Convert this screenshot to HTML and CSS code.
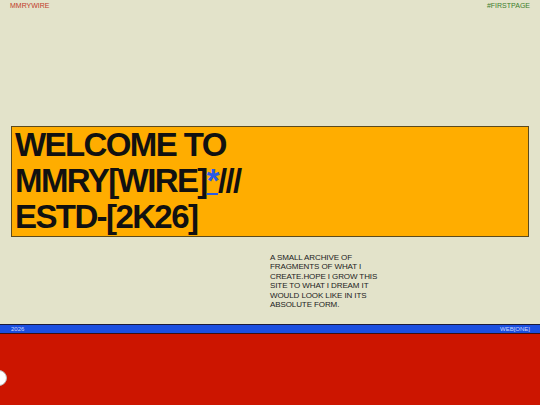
FILE: index.html
```html
<!DOCTYPE html>
<html>
<head>
<meta charset="utf-8">
<link rel="stylesheet" href="styles.css">
</head>
<body>
<div class="page">
  <header class="top">
    <span class="brand">MMRYWIRE</span>
    <span class="tag">#FIRSTPAGE</span>
  </header>
  <section class="hero">
    <h1 class="title">WELCOME TO<br>MMRY[WIRE]<a class="star" href="#">*</a>///<br>ESTD-[2K26]</h1>
  </section>
  <p class="about">A SMALL ARCHIVE OF FRAGMENTS OF WHAT I CREATE.HOPE I GROW THIS SITE TO WHAT I DREAM IT WOULD LOOK LIKE IN ITS ABSOLUTE FORM.</p>
  <div class="bar">
    <span>2026</span>
    <span>WEB[ONE]</span>
  </div>
  <footer class="foot">
    <span class="dot"></span>
  </footer>
</div>
</body>
</html>
```

FILE: styles.css
```css
html, body {
  margin: 0;
  padding: 0;
  background: #e3e3ca;
}
body {
  font-family: "Liberation Sans", Arial, sans-serif;
}
.page {
  height: 405px;
  display: flex;
  flex-direction: column;
  overflow: hidden;
}
.top {
  display: flex;
  justify-content: space-between;
  padding: 1px 10px 0 10px;
  font-size: 7px;
  line-height: 9px;
}
.brand { color: #c0392b; }
.tag { color: #3c7d2c; }
.hero {
  margin: 116px 11px 0 11px;
  background: #ffad00;
  border: 1px solid #5c4b1e;
  padding: 0 4px 1px 3px;
}
.title {
  margin: 0;
  font-size: 33px;
  line-height: 36px;
  font-weight: bold;
  letter-spacing: -1.6px;
  color: #111;
}
.star {
  color: #2a5be8;
  text-decoration: underline;
  text-decoration-thickness: 2px;
  text-underline-offset: 1px;
}
.about {
  margin: 16px 0 0 270px;
  width: 114px;
  font-size: 8px;
  line-height: 9.4px;
  color: #222;
  letter-spacing: -0.1px;
}
.bar {
  margin-top: auto;
  height: 8px;
  background: #1b4fe0;
  border-top: 1px solid #1a1a3a;
  border-bottom: 1px solid #3a1010;
  display: flex;
  justify-content: space-between;
  align-items: center;
  padding: 0 10px 0 11px;
  font-size: 6px;
  color: #cfd8ff;
}
.foot {
  height: 71px;
  background: #cc1500;
  position: relative;
}
.dot {
  position: absolute;
  left: -9px;
  top: 36px;
  width: 14px;
  height: 14px;
  border-radius: 50%;
  background: #fff;
  border: 1px solid #bbb;
}
```
